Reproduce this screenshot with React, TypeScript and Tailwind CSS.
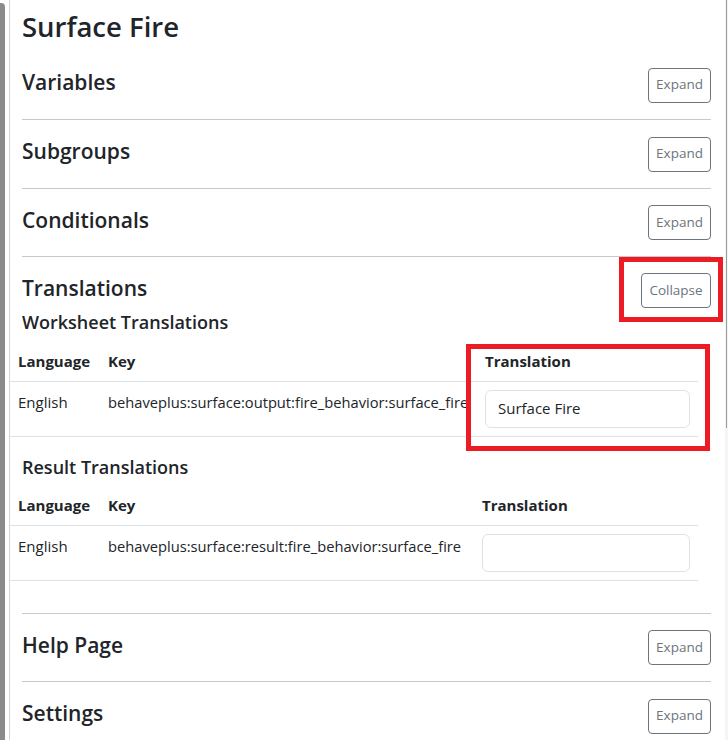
import React from "react";

const font = { fontFamily: '"Open Sans", "Noto Sans", Arial, sans-serif' };

function Btn({ label, w }: { label: string; w: string }) {
  return (
    <button
      className={`h-[35px] ${w} shrink-0 rounded-[4px] border border-[#6c757d] bg-white text-[13.5px] text-[#6c757d] leading-none flex items-center justify-center`}
    >
      {label}
    </button>
  );
}

function Section({ title, h, border = true }: { title: string; h: string; border?: boolean }) {
  return (
    <div
      className={`${h} flex items-center justify-between ${border ? "border-b border-[#c8c9ca]" : ""} ml-[12px] mr-[14px]`}
    >
      <h4 className="mb-[5px] text-[21px] font-semibold text-[#212529] leading-tight">{title}</h4>
      <Btn label="Expand" w="w-[63px]" />
    </div>
  );
}

function TransTable({ keyText, value, w1, w2, w3 }: { keyText: string; value: string; w1: string; w2: string; w3: string }) {
  return (
    <table className="w-[688px] table-fixed border-collapse text-[15px] text-[#212529]">
      <colgroup>
        <col className={w1} />
        <col className={w2} />
        <col className={w3} />
      </colgroup>
      <thead>
        <tr className="border-b border-[#dee2e6]">
          <th className="h-[40px] px-[8px] text-left font-bold text-[15px] leading-[24px]">Language</th>
          <th className="h-[40px] px-[8px] text-left font-bold text-[15px] leading-[24px]">Key</th>
          <th className="h-[40px] px-[8px] text-left font-bold text-[15px] leading-[24px]">Translation</th>
        </tr>
      </thead>
      <tbody>
        <tr className="border-b border-[#dee2e6]">
          <td className="p-[8px] align-top leading-[24px]">English</td>
          <td className="p-[8px] align-top leading-[24px] text-[14.7px] whitespace-nowrap overflow-visible">{keyText}</td>
          <td className="p-[8px] align-top">
            <div className="h-[38px] w-full rounded-[6px] border border-[#dee2e6] px-[12px] flex items-center text-[15px] text-[#212529]">
              {value}
            </div>
          </td>
        </tr>
      </tbody>
    </table>
  );
}

export default function App() {
  return (
    <div className="relative flex w-[728px] h-[740px] overflow-hidden bg-white" style={font}>
      <div className="w-[5px] mt-[3px] bg-[#8b8b8b] rounded-tr-[4px]" />
      <div className="w-[4px]" />
      <div className="w-px bg-[#d6d6d6]" />
      <div className="w-[715px] flex flex-col">
        <div className="h-[51px] shrink-0 pl-[12px] pt-[10px]">
          <h3 className="text-[27.5px] font-semibold text-[#212529] leading-[34px]">Surface Fire</h3>
        </div>
        <Section title="Variables" h="h-[69px] shrink-0" />
        <Section title="Subgroups" h="h-[69px] shrink-0" />
        <Section title="Conditionals" h="h-[68px] shrink-0" />
        <div className="ml-[12px] mr-[14px] pt-[16px] flex justify-between shrink-0">
          <div className="flex flex-col">
            <h4 className="h-[35px] pb-[5px] flex items-center text-[21px] font-semibold text-[#212529] leading-tight">Translations</h4>
            <h5 className="mt-[2px] text-[18px] font-semibold text-[#212529] leading-[24px]">Worksheet Translations</h5>
          </div>
          <Btn label="Collapse" w="w-[70px]" />
        </div>
        <div className="mt-[7px] shrink-0">
          <TransTable
            keyText="behaveplus:surface:output:fire_behavior:surface_fire"
            value="Surface Fire"
            w1="w-[90px]"
            w2="w-[377px]"
            w3="w-[221px]"
          />
        </div>
        <h5 className="mt-[18px] pl-[12px] text-[18px] font-semibold text-[#212529] leading-[24px] shrink-0">Result Translations</h5>
        <div className="mt-[7px] shrink-0">
          <TransTable
            keyText="behaveplus:surface:result:fire_behavior:surface_fire"
            value=""
            w1="w-[90px]"
            w2="w-[374px]"
            w3="w-[224px]"
          />
        </div>
        <div className="mt-[32px] ml-[12px] mr-[14px] h-px bg-[#c8c9ca] shrink-0" />
        <Section title="Help Page" h="h-[68px] shrink-0" />
        <Section title="Settings" h="h-[68px] shrink-0" border={false} />
      </div>
      <div className="w-[3px] bg-[#f5f5f5] flex">
        <div className="ml-[1px] w-[1px] h-[428px] bg-[#9a9a9a]" />
      </div>
      <div className="absolute left-[619px] top-[257px] w-[104px] h-[65px] border-[5px] border-[#ed1c24]" />
      <div className="absolute left-[466px] top-[344px] w-[244px] h-[107px] border-[5px] border-[#ed1c24]" />
    </div>
  );
}
